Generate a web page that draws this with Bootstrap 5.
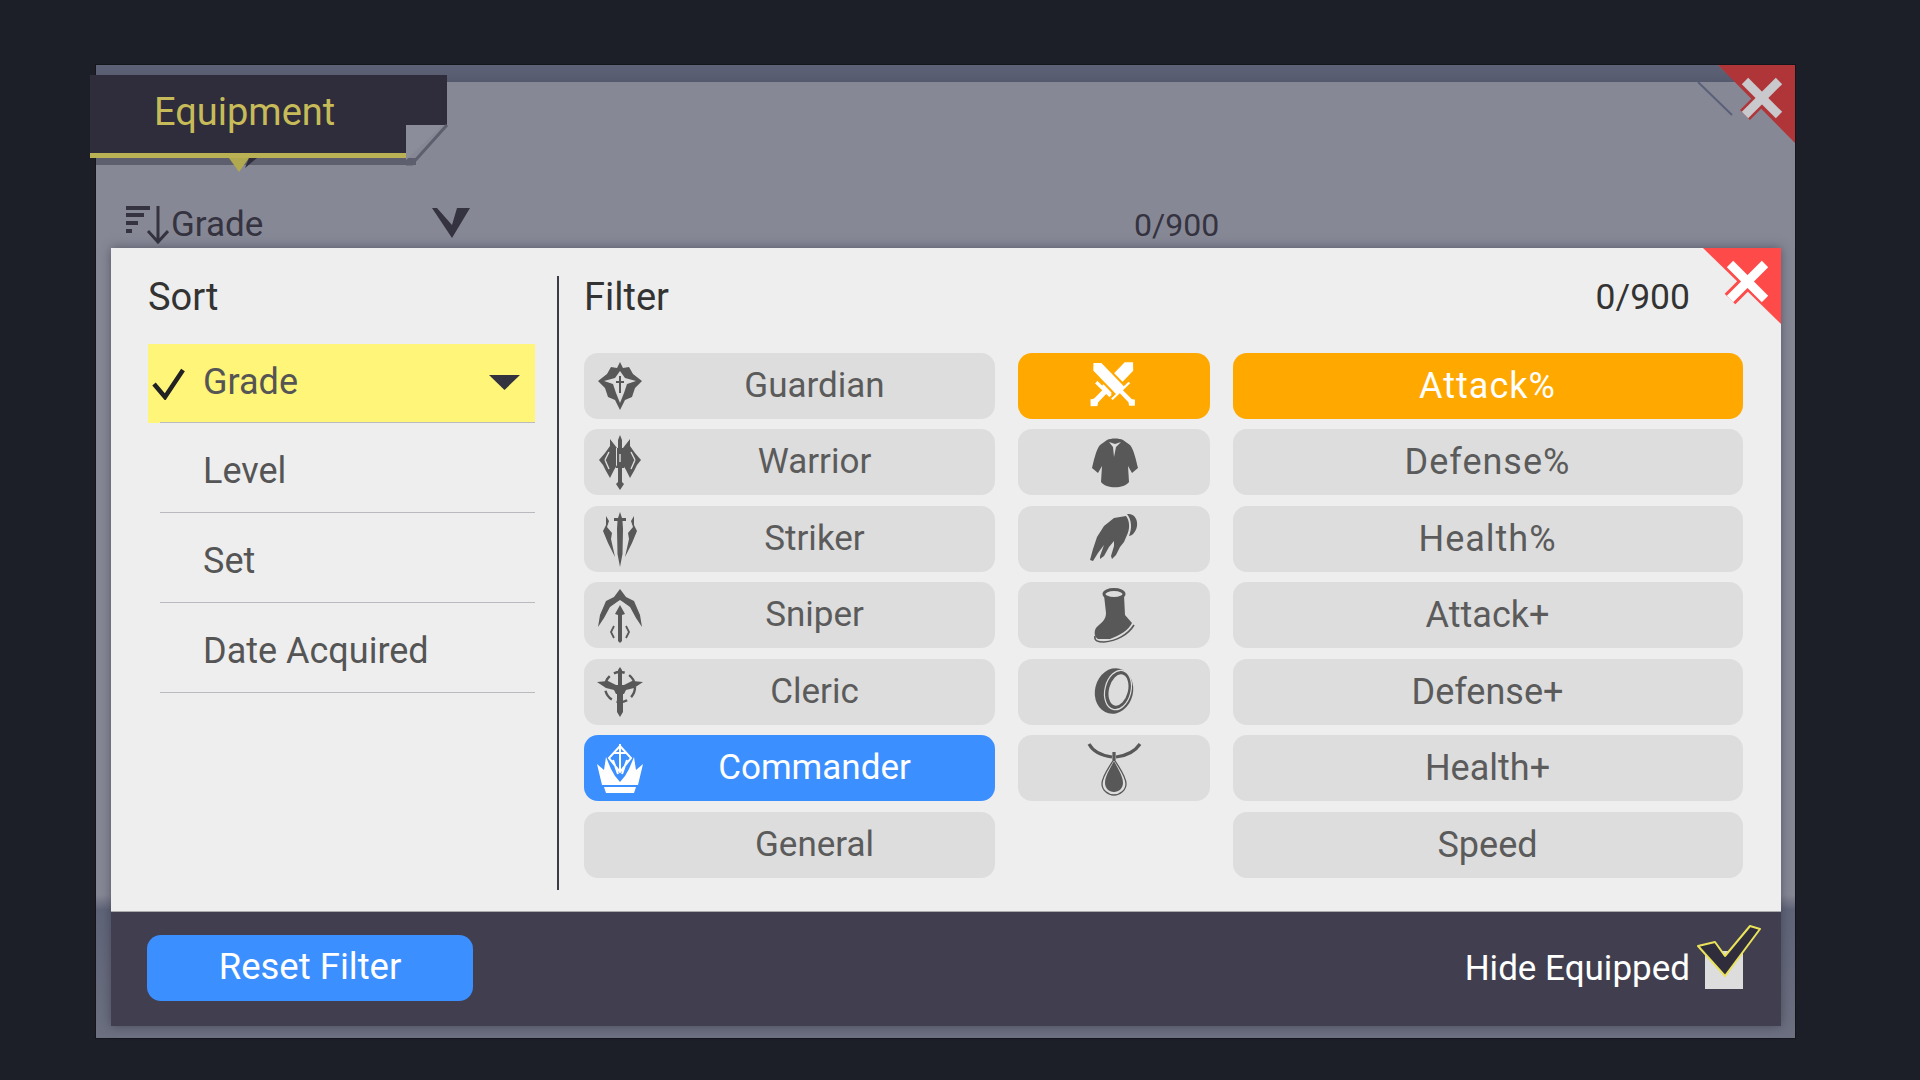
<!DOCTYPE html>
<html lang="en">
<head>
<meta charset="utf-8">
<title>Equipment</title>
<link href="https://cdn.jsdelivr.net/npm/bootstrap@5.3.0/dist/css/bootstrap.min.css" rel="stylesheet">
<style>
html,body{height:100%}
body{background:#1c1f28;margin:0;padding:65px 0 0 96px;overflow:hidden;font-family:Roboto,"Liberation Sans",sans-serif;font-size:35px;color:#333}
.win{position:relative;width:1699px;height:973px;padding:0 14px 0 15px;background:linear-gradient(#878896 0,#878896 830px,#5f6478 845px,#6c7080 100%);box-shadow:0 0 0 1px #14161c}
.band{height:17px;margin:0 -14px 0 -15px;background:linear-gradient(#5d6277,#555a6e);clip-path:polygon(0 0,1622px 0,1640px 17px,0 17px)}
.tabwrap{position:absolute;left:-6px;top:10px;width:360px;height:98px}
.tabtitle{position:absolute;left:64px;top:16px;color:#c6bb58;font-size:38px;line-height:42px}
.corner{position:absolute;right:0;top:0;width:110px;height:90px}
.tbar{height:40px;margin:122px 0 3.5px;padding-left:14px;color:#34333f}
.tb-grade{width:261px;padding:3px 0 0 2px}
.tb-mark{margin-left:2px;margin-top:-2px}
.tb-count{margin-left:664px;font-size:32px;padding-top:1px}
.sheet{position:relative;height:778px;background:#eee;box-shadow:0 0 10px rgba(45,45,60,.55)}
.sheet-x{position:absolute;right:0;top:0}
.sheet-main{height:664px;border-bottom:1px solid #aaa}
.sortcol{width:448px;padding:0 22px 0 37px;margin:28px 0 21px;border-right:2px solid #3c3c46}
.hd{height:42px;line-height:42px;color:#333;font-size:38px}
.sortlist{margin-top:26px;font-size:36px}
.sortrow{position:relative;height:90px;padding:7px 0 0 55px;color:#555}
.sortrow::after{content:"";position:absolute;left:12px;right:0;bottom:0;height:1px;background:#b9b9bf}
.sortrow.on{height:79px;background:#fff578;padding:0 0 2px 55px}
.filtercol{padding:28px 39px 0 25px;width:1222px}
.countr{padding-right:52px;font-size:35.5px}
.gridx{display:grid;grid-template-columns:411px 192.5px 510px;grid-auto-rows:66px;column-gap:22.5px;row-gap:10.5px;margin-top:35px}
.opt{padding:0;height:66px;border:0;border-radius:14px;background:#ddd;color:#5b5b5b;font-size:35px}
.opt.btn:hover,.opt.btn:focus{background:#ddd;color:#5b5b5b}
.stat{font-size:36px}
.pct{letter-spacing:1px}
.opt svg{flex:none}
.slot{width:48px;height:60px;margin-left:12px;flex:none}
.lbl{flex:1 1 auto;text-align:center;padding:1px 10px 0 0}
.opt.blue,.opt.blue.btn:hover{background:#3c8fff;color:#fff}
.opt.orange,.opt.orange.btn:hover{background:#ffa800;color:#fff}
.foot{height:114px;background:#413f4f;padding:0 20px 0 36px}
.reset{width:326px;height:66px;padding:0;border:0;border-radius:14px;background:#3c8fff;color:#fff;font-size:36.5px;margin-bottom:2px}
.reset.btn:hover{background:#3c8fff;color:#fff}
.hide{color:#fff;padding-top:1px}
.hidechk{margin:12px 0 0 7px;align-self:flex-start}
.chk-mark{left:4px;top:24px;line-height:0}
.tri{margin-right:15px}
</style>
</head>
<body>
<div class="win">
  <div class="band"></div>
  <svg class="corner" viewBox="0 0 110 90" width="110" height="90" aria-hidden="true">
    <polygon points="33,0 110,0 110,78" fill="#b03538"/>
    <line x1="13" y1="17" x2="47" y2="50" stroke="#5a6078" stroke-width="2"/>
    <line x1="60" y1="50" x2="94" y2="16" stroke="#b03538" stroke-width="14"/>
    <line x1="60" y1="50" x2="94" y2="16" stroke="#c9c9cd" stroke-width="9"/>
    <line x1="60" y1="16" x2="94" y2="50" stroke="#c9c9cd" stroke-width="9"/>
  </svg>
  <div class="tabwrap">
    <svg viewBox="0 0 360 98" width="360" height="98" aria-hidden="true">
      <rect x="6" y="83" width="320" height="7" fill="#5e5f6e"/>
      <polygon points="0,0 357,0 357,50 316,50 316,78 0,78" fill="#2f2d3b"/>
      <polygon points="316,50 353,50 316,85" fill="#8c8d9a"/>
      <polyline points="357,50 322,89 316,89" fill="none" stroke="#5e5f6e" stroke-width="3"/>
      <rect x="0" y="78" width="316" height="5" fill="#b9b154"/>
      <polygon points="139,83 159,83 149,97" fill="#b0a94f"/>
      <polygon points="159,83 167,83 155,93" fill="#2f2d3b"/>
    </svg>
    <div class="tabtitle">Equipment</div>
  </div>
  <div class="tbar d-flex align-items-center">
    <svg width="44" height="40" viewBox="0 0 44 40" aria-hidden="true" fill="#34333f">
      <rect x="1" y="2" width="24" height="4"/><rect x="1" y="9" width="18" height="4"/><rect x="1" y="17" width="12" height="4"/><rect x="1" y="25" width="6" height="4"/>
      <path d="M33 2V37M23 27L33 38L43 27" fill="none" stroke="#34333f" stroke-width="3"/>
    </svg>
    <div class="tb-grade">Grade</div>
    <svg class="tb-mark" width="38" height="30" viewBox="0 0 38 30" aria-hidden="true"><polygon points="0,0 5,0 20,17 25,0 38,0 20,30" fill="#34333f"/></svg>
    <div class="tb-count">0/900</div>
  </div>
  <div class="sheet">
    <svg class="sheet-x" width="78" height="78" viewBox="0 0 78 78" aria-hidden="true">
      <polygon points="0,0 78,0 78,76" fill="#ff4a4a"/>
      <line x1="27" y1="51" x2="62" y2="16" stroke="#ff4a4a" stroke-width="15"/>
      <line x1="27" y1="51" x2="62" y2="16" stroke="#fff" stroke-width="9"/>
      <line x1="27" y1="16" x2="62" y2="51" stroke="#fff" stroke-width="9"/>
    </svg>
    <div class="sheet-main d-flex">
      <div class="sortcol">
        <div class="hd">Sort</div>
        <div class="sortlist">
          <div class="sortrow on d-flex align-items-center">
            <span class="position-absolute chk-mark"><svg width="34" height="32" viewBox="0 0 34 32" aria-hidden="true"><path d="M2 16L13 29L31 2" fill="none" stroke="#222" stroke-width="4.5"/></svg></span>
            Grade
            <svg class="ms-auto tri" width="31" height="15" viewBox="0 0 31 15" aria-hidden="true"><polygon points="0,0 31,0 15.5,15" fill="#33323f"/></svg>
          </div>
          <div class="sortrow d-flex align-items-center">Level</div>
          <div class="sortrow d-flex align-items-center">Set</div>
          <div class="sortrow d-flex align-items-center">Date Acquired</div>
        </div>
      </div>
      <div class="filtercol">
        <div class="hd d-flex justify-content-between"><span>Filter</span><span class="countr">0/900</span></div>
        <div class="gridx">
          <button class="btn opt d-flex align-items-center" type="button">
            <svg class="slot" viewBox="0 0 48 60" aria-hidden="true"><path fill="#585858" fill-rule="evenodd" d="M24 6L27 12L33 11L37 18L46 25L39 32L36 41L29 44L24 54L19 44L12 41L9 32L2 25L11 18L15 11L21 12ZM24 15L29 22L40 25L31 28L28 37L24 47L20 37L17 28L8 25L19 22ZM23 20V25H20V27H23V37H25V27H28V25H25V20Z"/></svg>
            <span class="lbl">Guardian</span></button>
          <button class="btn opt orange d-flex align-items-center justify-content-center" type="button">
            <svg width="60" height="60" viewBox="-30 -30 60 60" aria-hidden="true">
              <g transform="translate(-1 -3)">
                <g transform="rotate(44) scale(1.1)"><path fill="#fff" stroke="#ffa800" stroke-width="1" d="M0 -27L6 -21V8H12V12H3V22L5 25L0 30L-5 25L-3 22V12H-12V8H-6V-21Z"/></g>
                <g transform="rotate(-44) scale(1.1)"><path fill="#fff" stroke="#ffa800" stroke-width="2" d="M0 -27L6 -21V8H12V12H3V22L5 25L0 30L-5 25L-3 22V12H-12V8H-6V-21Z"/></g>
              </g>
            </svg></button>
          <button class="btn opt orange stat pct" type="button">Attack%</button>

          <button class="btn opt d-flex align-items-center" type="button">
            <svg class="slot" viewBox="0 0 48 60" aria-hidden="true"><path fill="#585858" d="M24 3L26 8V16H28V36H26V50L28 52L24 58L20 52L22 50V36H20V16H22V8ZM21 16L14 7L14 14L9 21L3 28L7 33L10 39L14 46L18 38L21 33ZM27 16L34 7L34 14L39 21L45 28L41 33L38 39L34 46L30 38L27 33Z"/><path fill="none" stroke="#ddd" stroke-width="1.4" d="M9 28L13 20M9 28L13 37M39 28L35 20M39 28L35 37M24 22V30"/></svg>
            <span class="lbl">Warrior</span></button>
          <button class="btn opt d-flex align-items-center justify-content-center" type="button">
            <svg width="60" height="60" viewBox="0 0 60 60" aria-hidden="true"><path fill="#585858" d="M23 8C27 6 35 6 39 8L46 13C50 18 52 28 54 36L48 41L44 34L45 50C40 57 22 57 17 50L18 34L14 41L8 36C10 28 12 18 16 13Z"/><path fill="#ddd" d="M25 10L31 12L37 10L32 15L30 25L29 15Z"/></svg></button>
          <button class="btn opt stat pct" type="button">Defense%</button>

          <button class="btn opt d-flex align-items-center" type="button">
            <svg class="slot" viewBox="0 0 48 60" aria-hidden="true"><path fill="#585858" d="M24 3L26 9H30V12H26.5L27 20L26.5 45L24 58L21.5 45L21 20L21.5 12H18V9H22ZM10 7L13 12L11 18L16 24L15 30L19 48L12 34L7 22L10 16ZM38 7L35 12L37 18L32 24L33 30L29 48L36 34L41 22L38 16Z"/></svg>
            <span class="lbl">Striker</span></button>
          <button class="btn opt d-flex align-items-center justify-content-center" type="button">
            <svg width="60" height="60" viewBox="0 0 60 60" aria-hidden="true"><path fill="#585858" d="M30 9L42 7C46 12 46 20 43 26L40 33L36 38L32 46L28 50L27 47L30 37V32L25 38L20 47L16 50V47L20 36L14 44L9 52L6 51L9 40L13 28L20 17Z"/><path fill="#585858" d="M43 5C50 4 54 10 53 17C52 23 48 27 45 27C48 20 48 11 43 5Z"/></svg></button>
          <button class="btn opt stat pct" type="button">Health%</button>

          <button class="btn opt d-flex align-items-center" type="button">
            <svg class="slot" viewBox="0 0 48 60" aria-hidden="true"><path fill="#585858" d="M24 4L30 12L38 16L44 30L46 42L40 33L34 22L27 17L24 15L21 17L14 22L8 33L2 42L4 30L10 16L18 12ZM24 20L29 29L26 30V56L24 58L22 56V30L19 29Z"/><path fill="none" stroke="#585858" stroke-width="1.8" d="M18 41L15 47L18 53M30 41L33 47L30 53"/></svg>
            <span class="lbl">Sniper</span></button>
          <button class="btn opt d-flex align-items-center justify-content-center" type="button">
            <svg width="60" height="60" viewBox="0 0 60 60" aria-hidden="true"><path fill="#585858" d="M20 10C24 14 36 14 40 10L41 30L48 38C44 46 36 50 26 54H14C10 52 10 46 12 43C16 38 22 36 22 28Z"/><ellipse cx="30" cy="9" rx="10" ry="4.5" fill="none" stroke="#585858" stroke-width="3"/><path fill="none" stroke="#585858" stroke-width="1.6" d="M11 51C10 56 14 57 20 57C32 56 44 50 50 40"/></svg></button>
          <button class="btn opt stat" type="button">Attack+</button>

          <button class="btn opt d-flex align-items-center" type="button">
            <svg class="slot" viewBox="0 0 48 60" aria-hidden="true"><path fill="#585858" d="M24 5L26 8V26L27 28V50L24 55L21 50V28L22 26V8ZM1 20L12 19L20 23H28L36 19L47 20L38 26L30 28L28 32H20L18 28L10 26Z"/><circle cx="24" cy="25" r="15" fill="none" stroke="#585858" stroke-width="2.4" stroke-dasharray="11 5"/></svg>
            <span class="lbl">Cleric</span></button>
          <button class="btn opt d-flex align-items-center justify-content-center" type="button">
            <svg width="60" height="60" viewBox="0 0 60 60" aria-hidden="true"><ellipse cx="30" cy="29" rx="19" ry="23" transform="rotate(14 30 29)" fill="#585858"/><ellipse cx="34" cy="28" rx="13" ry="20" transform="rotate(14 34 28)" fill="none" stroke="#ddd" stroke-width="1.2"/><ellipse cx="34.500" cy="28" rx="9.500" ry="16" transform="rotate(14 34.500 28)" fill="#ddd"/></svg></button>
          <button class="btn opt stat" type="button">Defense+</button>

          <button class="btn opt blue d-flex align-items-center" type="button">
            <svg class="slot" viewBox="0 0 48 60" aria-hidden="true"><path fill="#fff" d="M8 49H40L38 55H10ZM1 26L8 32L10 19L15 31L19 38L24 44L29 38L33 31L38 19L40 32L47 26L42 47H6Z"/><path fill="none" stroke="#fff" stroke-width="2" d="M24 6V32M17 15H31M24 8L35 20L24 34L13 20ZM17 22L22 36M31 22L26 36"/></svg>
            <span class="lbl">Commander</span></button>
          <button class="btn opt d-flex align-items-center justify-content-center" type="button">
            <svg width="60" height="60" viewBox="0 0 60 60" aria-hidden="true"><path fill="none" stroke="#585858" stroke-width="3.2" d="M5 6C10 15 20 18 28 19M32 19C40 18 50 15 56 6M30 14V22"/><path fill="#585858" d="M30 23C34 31 39 38 39 45C39 50 35 54 30 54C25 54 21 50 21 45C21 38 26 31 30 23Z"/><path fill="none" stroke="#585858" stroke-width="1.300" d="M30 21C35 30 42 38 42 46C42 52 36 57 30 57C24 57 18 52 18 46C18 38 25 30 30 21Z"/></svg></button>
          <button class="btn opt stat" type="button">Health+</button>

          <button class="btn opt d-flex align-items-center" type="button">
            <span class="slot"></span>
            <span class="lbl">General</span></button>
          <div></div>
          <button class="btn opt stat" type="button">Speed</button>
        </div>
      </div>
    </div>
    <div class="foot d-flex align-items-center">
      <button class="btn reset" type="button">Reset Filter</button>
      <div class="hide ms-auto">Hide Equipped</div>
      <svg class="hidechk" width="64" height="66" viewBox="0 0 64 66" aria-hidden="true"><rect x="8" y="27" width="38" height="38" fill="#ddd"/><polygon points="1,22 18,18 28,32 53,2 63,5 28,52" fill="#2f2d3b" stroke="#e9e25a" stroke-width="2" stroke-linejoin="round"/></svg>
    </div>
  </div>
</div>
<script src="https://cdn.jsdelivr.net/npm/bootstrap@5.3.0/dist/js/bootstrap.bundle.min.js"></script>
</body>
</html>
